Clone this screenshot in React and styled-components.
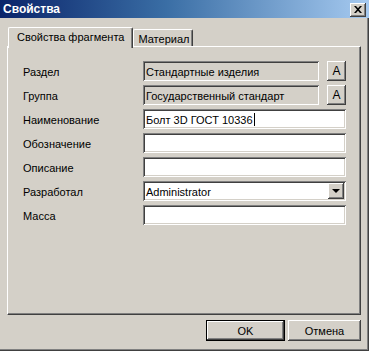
import React from 'react';
import styled, { createGlobalStyle } from 'styled-components';

const GlobalStyle = createGlobalStyle`
  html, body {
    margin: 0;
    padding: 0;
    background: #d4d0c8;
  }
  body {
    font-family: "Liberation Sans", Arial, sans-serif;
    font-size: 11px;
    color: #000000;
  }
`;

const raised = `
  box-shadow: inset -1px -1px #404040, inset 1px 1px #ffffff,
    inset -2px -2px #808080, inset 2px 2px #d4d0c8;
`;

const sunken = `
  box-shadow: inset 1px 1px #808080, inset -1px -1px #ffffff,
    inset 2px 2px #404040, inset -2px -2px #d4d0c8;
`;

const Window = styled.div`
  width: 369px;
  height: 351px;
  box-sizing: border-box;
  background: #d4d0c8;
  display: flex;
  flex-direction: column;
  box-shadow: inset -1px -1px #404040, inset -2px -2px #808080;
`;

const TitleBar = styled.div`
  height: 18px;
  display: flex;
  align-items: center;
  justify-content: space-between;
  padding: 0 3px 0 3px;
  background: linear-gradient(to right, #0a246a 0%, #3a6ea5 45%, #a6caf0 100%);
  color: #ffffff;
  font-weight: bold;
  font-size: 12px;
`;

const CloseButton = styled.div`
  width: 16px;
  height: 14px;
  background: #d4d0c8;
  ${raised}
  display: flex;
  align-items: center;
  justify-content: center;
  margin-top: 1px;
`;

const Body = styled.div`
  display: flex;
  flex-direction: column;
  padding: 9px 8px 0 7px;
`;

const TabStrip = styled.div`
  display: flex;
  align-items: flex-end;
  height: 19px;
  padding-left: 1px;
  position: relative;
  z-index: 1;
`;

const Tab = styled.div`
  box-sizing: border-box;
  height: ${(p) => (p.$active ? 21 : 17)}px;
  margin-bottom: ${(p) => (p.$active ? -2 : 0)}px;
  padding: ${(p) => (p.$active ? '3px 8px 0 8px' : '1px 3px 0 4px')};
  background: #d4d0c8;
  border-top: 1px solid #ffffff;
  border-left: 1px solid #ffffff;
  border-right: 1px solid #404040;
  border-radius: 2px 2px 0 0;
  box-shadow: inset -1px 0 #808080;
  display: flex;
  align-items: ${(p) => (p.$active ? 'flex-start' : 'center')};
  white-space: nowrap;
`;

const Panel = styled.div`
  box-sizing: border-box;
  height: 269px;
  border-top: 1px solid #ffffff;
  border-left: 1px solid #ffffff;
  border-right: 1px solid #404040;
  border-bottom: 1px solid #404040;
  box-shadow: inset -1px -1px #808080;
  padding: 14px 14px 0 15px;
`;

const Form = styled.div`
  display: grid;
  grid-template-columns: 120px 1fr;
  row-gap: 4px;
`;

const Label = styled.div`
  height: 20px;
  display: flex;
  align-items: center;
  padding-top: 2px;
  box-sizing: border-box;
`;

const FieldRow = styled.div`
  display: flex;
  align-items: flex-start;
  gap: 8px;
  height: 20px;
`;

const Field = styled.div`
  box-sizing: border-box;
  flex: 1;
  height: 20px;
  background: ${(p) => (p.$readOnly ? '#d4d0c8' : '#ffffff')};
  ${sunken}
  display: flex;
  align-items: center;
  padding: 1px 3px 0 3px;
  white-space: nowrap;
  overflow: hidden;
  position: relative;
`;

const Caret = styled.span`
  display: inline-block;
  width: 1px;
  height: 13px;
  background: #000000;
  margin-left: 1px;
`;

const SmallButton = styled.div`
  box-sizing: border-box;
  width: 19px;
  height: 20px;
  background: #d4d0c8;
  ${raised}
  display: flex;
  align-items: center;
  justify-content: center;
  font-size: 12px;
`;

const DropButton = styled.div`
  position: absolute;
  right: 2px;
  top: 2px;
  width: 16px;
  height: 16px;
  background: #d4d0c8;
  ${raised}
  display: flex;
  align-items: center;
  justify-content: center;
`;

const Arrow = styled.span`
  width: 0;
  height: 0;
  border-left: 4px solid transparent;
  border-right: 4px solid transparent;
  border-top: 4px solid #000000;
  margin-left: -1px;
`;

const ButtonRow = styled.div`
  display: flex;
  justify-content: flex-end;
  gap: 3px;
  margin-top: 5px;
`;

const DialogButton = styled.div`
  box-sizing: border-box;
  width: ${(p) => p.$width}px;
  height: 21px;
  background: #d4d0c8;
  display: flex;
  align-items: center;
  justify-content: center;
  ${(p) =>
    p.$default
      ? `box-shadow: inset 0 0 0 1px #000000, inset -2px -2px #404040,
          inset 2px 2px #ffffff, inset -3px -3px #808080;`
      : raised}
`;

const rows = [
  { label: 'Раздел', value: 'Стандартные изделия', readOnly: true, button: true },
  { label: 'Группа', value: 'Государственный стандарт', readOnly: true, button: true },
  { label: 'Наименование', value: 'Болт 3D ГОСТ 10336', caret: true },
  { label: 'Обозначение', value: '' },
  { label: 'Описание', value: '' },
  { label: 'Разработал', value: 'Administrator', combo: true },
  { label: 'Масса', value: '' },
];

const App = () => {
  return (
    <Window>
      <GlobalStyle />
      <TitleBar>
        <span>Свойства</span>
        <CloseButton>
          <svg width="8" height="7" viewBox="0 0 8 7">
            <path d="M0 0h2l2 2.2L6 0h2L5 3.5 8 7H6L4 4.8 2 7H0l3-3.5z" fill="#000" />
          </svg>
        </CloseButton>
      </TitleBar>
      <Body>
        <TabStrip>
          <Tab $active>Свойства фрагмента</Tab>
          <Tab>Материал</Tab>
        </TabStrip>
        <Panel>
          <Form>
            {rows.map((r) => (
              <React.Fragment key={r.label}>
                <Label>{r.label}</Label>
                <FieldRow>
                  <Field $readOnly={r.readOnly}>
                    {r.value}
                    {r.caret && <Caret />}
                    {r.combo && (
                      <DropButton>
                        <Arrow />
                      </DropButton>
                    )}
                  </Field>
                  {r.button && <SmallButton>A</SmallButton>}
                </FieldRow>
              </React.Fragment>
            ))}
          </Form>
        </Panel>
        <ButtonRow>
          <DialogButton $default $width={79}>OK</DialogButton>
          <DialogButton $width={73}>Отмена</DialogButton>
        </ButtonRow>
      </Body>
    </Window>
  );
};

export default App;
